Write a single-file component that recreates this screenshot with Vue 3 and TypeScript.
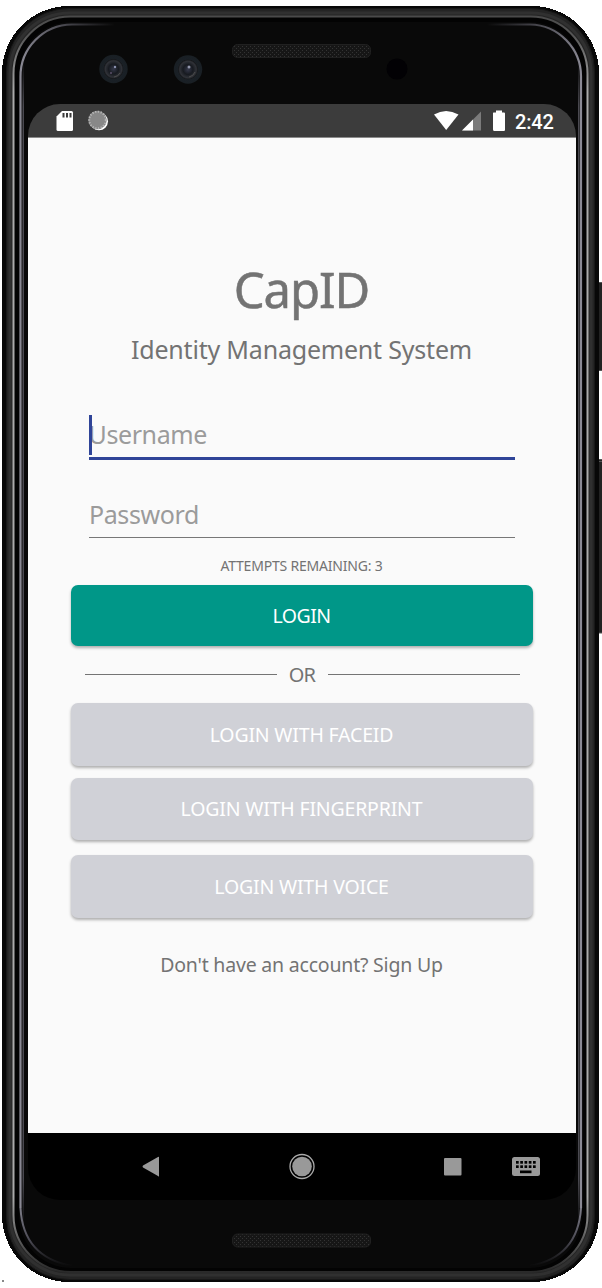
<script setup lang="ts">
interface Alternative {
  id: string
  label: string
}

const alternatives: Alternative[] = [
  { id: 'face', label: 'LOGIN WITH FACEID' },
  { id: 'finger', label: 'LOGIN WITH FINGERPRINT' },
  { id: 'voice', label: 'LOGIN WITH VOICE' },
]
const attempts = 3
const keyColumns = [0, 1, 2, 3, 4]
</script>

<template>
  <div class="device">
    <svg class="shell" width="602" height="1288" viewBox="0 0 602 1288">
      <defs>
        <linearGradient id="rim" x1="0" y1="0" x2="0" y2="1">
          <stop offset="0" stop-color="#4a4a4a" />
          <stop offset="0.015" stop-color="#555" />
          <stop offset="0.06" stop-color="#aaa" />
          <stop offset="0.94" stop-color="#aaa" />
          <stop offset="0.985" stop-color="#444" />
          <stop offset="1" stop-color="#292929" />
        </linearGradient>
        <linearGradient id="fadeLeft" gradientUnits="userSpaceOnUse" x1="21" y1="0" x2="115" y2="0">
          <stop offset="0" stop-color="#8a8994" />
          <stop offset="0.5" stop-color="#6a6974" stop-opacity="0.6" />
          <stop offset="1" stop-color="#6a6974" stop-opacity="0" />
        </linearGradient>
        <linearGradient id="fadeRight" gradientUnits="userSpaceOnUse" x1="581" y1="0" x2="487" y2="0">
          <stop offset="0" stop-color="#8a8994" />
          <stop offset="0.5" stop-color="#6a6974" stop-opacity="0.6" />
          <stop offset="1" stop-color="#6a6974" stop-opacity="0" />
        </linearGradient>
        <linearGradient id="side" gradientUnits="userSpaceOnUse" x1="0" y1="60" x2="0" y2="1225">
          <stop offset="0" stop-color="#4a4950" stop-opacity="0" />
          <stop offset="0.04" stop-color="#4a4950" />
          <stop offset="0.96" stop-color="#4a4950" />
          <stop offset="1" stop-color="#4a4950" stop-opacity="0" />
        </linearGradient>
        <linearGradient id="fadeDown" gradientUnits="userSpaceOnUse" x1="0" y1="1200" x2="0" y2="1266">
          <stop offset="0" stop-color="#8a8994" />
          <stop offset="0.6" stop-color="#4c4b55" />
          <stop offset="1" stop-color="#4c4b55" stop-opacity="0" />
        </linearGradient>
        <pattern id="mesh" width="4" height="4" patternUnits="userSpaceOnUse">
          <rect width="4" height="4" fill="#161616" />
          <rect width="1" height="1" fill="#333" />
          <rect x="2" y="2" width="1" height="1" fill="#333" />
        </pattern>
        <radialGradient id="lens">
          <stop offset="0" stop-color="#35384a" />
          <stop offset="0.35" stop-color="#171a20" />
          <stop offset="0.58" stop-color="#303238" />
          <stop offset="0.68" stop-color="#17191c" />
          <stop offset="0.72" stop-color="#1a2026" />
          <stop offset="1" stop-color="#191f24" />
        </radialGradient>
      </defs>
      <rect x="598.5" y="282" width="5" height="89" fill="#222" />
      <path d="M599 282.500H602M599 370.500H602" stroke="#555" />
      <rect x="598.500" y="459" width="5" height="174" fill="#222" />
      <path d="M599 459.500H602M599 461.500H602M599 633H602" stroke="#555" />
      <rect x="2" y="6" width="597" height="1276" rx="67" fill="#080808" shape-rendering="crispEdges" />
      <rect x="6.500" y="8.500" width="588" height="1271" rx="63" fill="#242424" stroke="#181818" />
      <rect x="10" y="13" width="581" height="1262" rx="60" fill="none" stroke="#303030" stroke-width="3" />
      <rect x="13.500" y="16.500" width="574" height="1255.500" rx="57" fill="#030303" stroke="url(#rim)" stroke-width="2" />
      <rect x="19" y="22" width="563" height="1246" rx="52" fill="#090909" />
      <path d="M115 24.500H72A52 52 0 0 0 20.500 77" fill="none" stroke="url(#fadeLeft)" stroke-width="2.200" />
      <path d="M487 24.500H530A52 52 0 0 1 581 77" fill="none" stroke="url(#fadeRight)" stroke-width="2.200" />
      <path d="M20.500 77V1208M581 77V1208" stroke="#8a8994" stroke-width="2.200" />
      <path d="M20.500 1208Q23 1257 72 1266M581 1208Q578 1257 530 1266" fill="none" stroke="url(#fadeDown)" stroke-width="2" />
      <path d="M22.500 60V1225H24V60ZM578 60V1225H579.500V60Z" fill="url(#side)" />
      <rect x="232.500" y="44.500" width="138" height="13" rx="5" fill="url(#mesh)" stroke="#202020" />
      <rect x="232.500" y="1234" width="138" height="13" rx="5" fill="url(#mesh)" stroke="#202020" />
      <circle cx="113.500" cy="69" r="14.200" fill="url(#lens)" />
      <circle cx="188" cy="69.500" r="14.200" fill="url(#lens)" />
      <circle cx="115" cy="67" r="1.200" fill="#8d92b0" />
      <circle cx="111" cy="73" r="1" fill="#5c506b" />
      <circle cx="189" cy="67" r="1.500" fill="#9296ab" />
      <path d="M120 73A8 8 0 0 1 114 77M195 72A8 8 0 0 1 189 77" fill="none" stroke="#4c4c4c" />
      <circle cx="397" cy="69" r="10.500" fill="#020104" />
      <rect x="2" y="1280" width="2" height="2" fill="#888" />
    </svg>

    <main class="screen">
      <header class="status">
        <svg width="60" height="33" viewBox="0 0 60 33">
          <path d="M6 7H15.500Q17 7 17 8.500V25.500Q17 27 15.500 27H2Q.5 27 .5 25.500V12.500Z" fill="#fff" />
          <path d="M7.500 9V13.500M11 9V13.500M14.500 9V13.500" stroke="#3c3c3c" stroke-width="2" />
          <circle cx="43" cy="17.300" r="9" fill="#fff" />
          <circle cx="41.500" cy="16" r="9.200" fill="#888" />
          <circle cx="41.500" cy="16" r="8.300" fill="none" stroke="#b5b5b5" stroke-width="2" stroke-dasharray="1.300 1.500" />
        </svg>
        <svg class="signals" width="78" height="33" viewBox="0 0 78 33">
          <path d="M0 10.500Q12 3.500 24.500 10.500L12.200 26Z" fill="#fff" />
          <path d="M28 26.500L47 7.500V26.500Z" fill="#7b7b7b" />
          <path d="M28 26.500L39 15.500V26.500Z" fill="#fff" />
          <path d="M59.500 8.500H62V6.500H68V8.500H70Q71 8.500 71 9.500V25.500Q71 27 70 27H60.500Q59 27 59 25.500V9.500Q59 8.500 59.500 8.500Z" fill="#fff" />
        </svg>
        <span class="clock">2:42</span>
      </header>

      <section class="content">
        <h1>CapID</h1>
        <h2>Identity Management System</h2>
        <div class="field focused"><i class="caret"></i><span>Username</span></div>
        <div class="field password"><span>Password</span></div>
        <p class="attempts">ATTEMPTS REMAINING: {{ attempts }}</p>
        <button class="primary">LOGIN</button>
        <div class="divider"><hr /><span>OR</span><hr /></div>
        <button v-for="item in alternatives" :key="item.id" :class="['muted', item.id]">{{ item.label }}</button>
        <p class="signup">Don't have an account? Sign Up</p>
      </section>

      <nav class="navbar">
        <svg width="548" height="67" viewBox="0 0 548 67">
          <path d="M131 24V43Q131 44 130 43L115 34.500Q114 33.500 115 32.500L130 24Q131 23.500 131 24Z" fill="#999" />
          <circle cx="274" cy="33.500" r="12" fill="none" stroke="#aaa" stroke-width="1.300" />
          <circle cx="274" cy="33.500" r="9.800" fill="#999" />
          <rect x="416" y="25" width="17.500" height="17.500" rx="1" fill="#999" />
          <rect x="484" y="24" width="28" height="19" rx="2.500" fill="#999" />
          <g fill="#000">
            <rect v-for="c in keyColumns" :key="c" :x="488 + c * 4.250" y="28" width="2.700" height="2.700" />
            <rect v-for="c in keyColumns" :key="'b' + c" :x="488 + c * 4.250" y="32.300" width="2.700" height="2.700" />
            <rect x="492" y="37.500" width="11.500" height="2.700" />
          </g>
        </svg>
      </nav>
    </main>
  </div>
</template>

<style>
body { background: #fff; }
</style>

<style scoped>
* { box-sizing: border-box; }
.device {
  position: relative;
  width: 602px;
  height: 1288px;
  padding: 104px 26px 0 28px;
  overflow: hidden;
  font-family: "Noto Sans", "Open Sans", sans-serif;
  color: #737373;
}
.shell { position: absolute; left: 0; top: 0; }
.screen {
  position: relative;
  display: flex;
  flex-direction: column;
  width: 548px;
  height: 1096px;
  border-radius: 32px;
  overflow: hidden;
}
.status {
  display: flex;
  height: 34px;
  padding: 0 19px 0 28px;
  background: #3c3c3c;
  border-bottom: 1px solid #8b8b8b;
  color: #fff;
}
.signals { margin-left: auto; }
.clock {
  width: 42px;
  margin-left: 3px;
  font: 500 20px/36px Roboto, sans-serif;
  letter-spacing: -0.200px;
  white-space: nowrap;
}
.content {
  flex: 1;
  display: flex;
  flex-direction: column;
  align-items: center;
  padding: 121px 43px 0 42px;
  background: #fafafa;
  white-space: nowrap;
}
h1, h2, p { margin: 0; font-weight: 400; }
h1 { font-size: 49px; line-height: 60px; letter-spacing: -1.100px; -webkit-text-stroke: 0.500px #737373; }
h2 { margin-top: 12px; font-size: 25px; line-height: 36px; letter-spacing: -0.200px; }
.field {
  position: relative;
  width: 426px;
  height: 45px;
  border-bottom: 3px solid #2f4498;
  font-size: 25px;
  line-height: 39px;
  letter-spacing: -0.400px;
  color: #9b9b9b;
}
.focused { margin-top: 48px; }
.caret {
  position: absolute;
  left: 0;
  top: 0;
  width: 3px;
  height: 40px;
  background: #2f4498;
}
.password { height: 43px; margin-top: 35px; border-bottom: 1px solid #777; }
.password span { margin-left: 0.500px; }
.attempts { margin-top: 18px; font-size: 14px; line-height: 20px; letter-spacing: -0.200px; }
button {
  display: block;
  width: 462px;
  padding: 0 0 1px;
  border: 0;
  border-radius: 7px;
  font-family: inherit;
  font-size: 19.500px;
  letter-spacing: -0.180px;
  color: #fff;
}
.primary {
  height: 61px;
  margin-top: 9px;
  background: #009788;
  letter-spacing: -0.500px;
  box-shadow: 0 2px 3px rgba(0, 0, 0, 0.3);
}
.divider {
  display: flex;
  align-items: center;
  justify-content: space-between;
  width: 435px;
  height: 28px;
  margin: 14px 0 0 1px;
  font-size: 20px;
  letter-spacing: -0.800px;
}
.divider hr { width: 192px; height: 1px; margin: 0; border: 0; background: #747474; }
.muted {
  height: 63px;
  background: #d0d1d7;
  box-shadow: 0 2px 3px rgba(0, 0, 0, 0.3);
}
.face { margin-top: 15px; }
.finger { height: 62px; margin-top: 12px; padding-bottom: 2px; }
.voice { margin-top: 15px; }
.signup { margin-top: 33px; font-size: 19.500px; line-height: 28px; letter-spacing: -0.200px; }
.navbar { height: 67px; background: #000; }
.navbar svg { display: block; }
</style>
